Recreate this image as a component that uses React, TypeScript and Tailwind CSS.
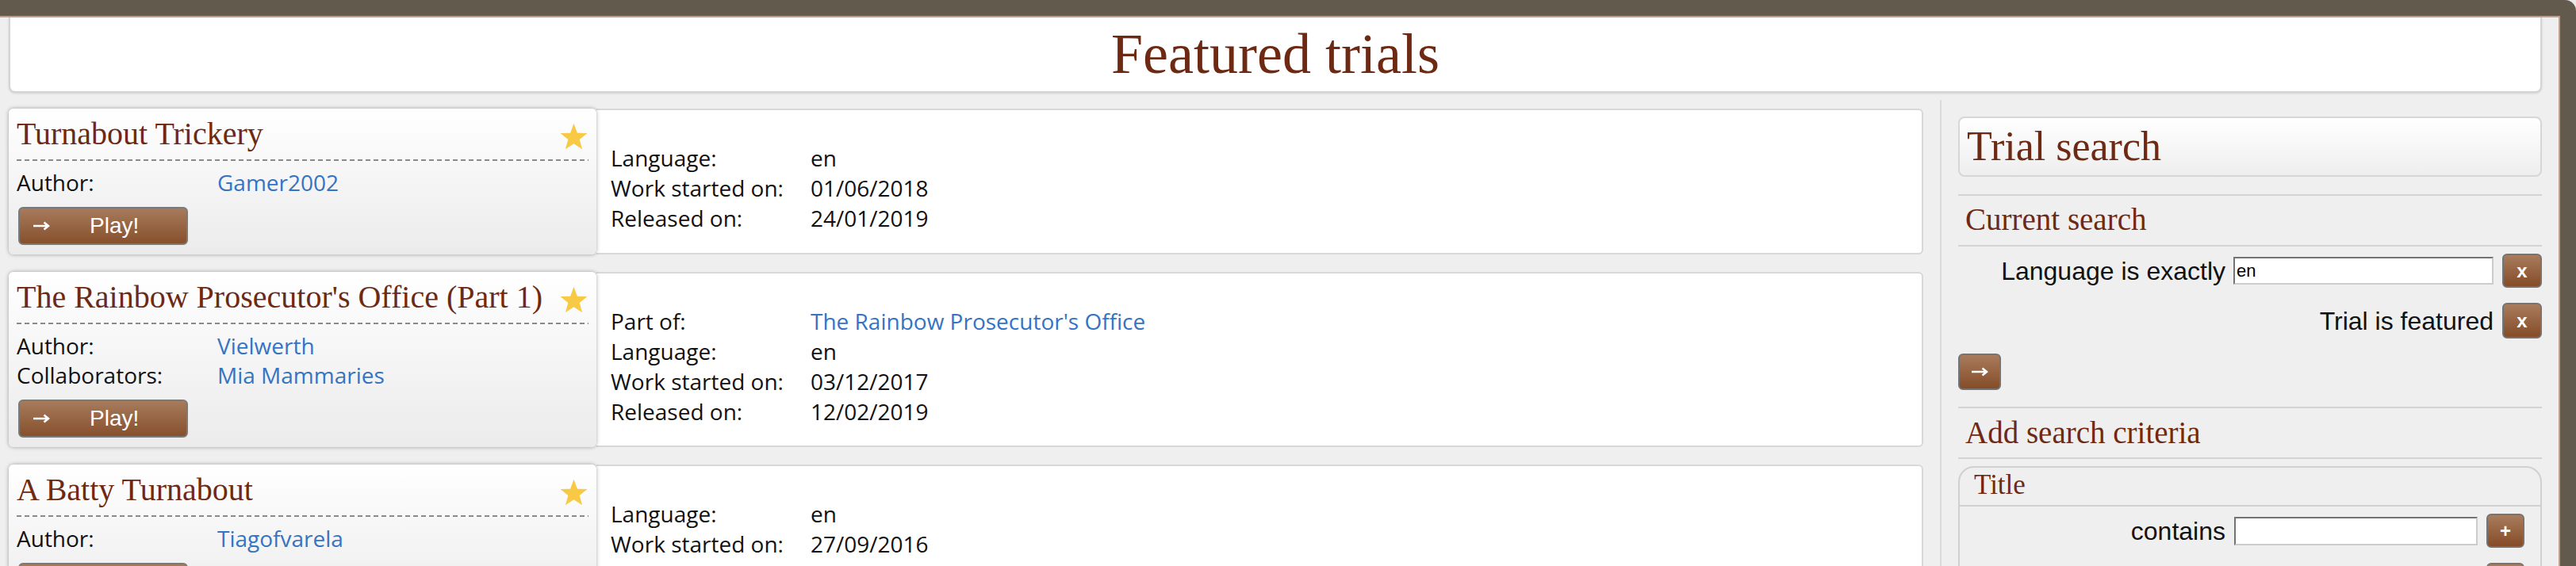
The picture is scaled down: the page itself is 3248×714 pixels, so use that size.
import React from 'react';

type Field = { label: string; value: string; link?: boolean };

interface Trial {
  title: string;
  credits: Field[];
  details: Field[];
}

const trials: Trial[] = [
  {
    title: 'Turnabout Trickery',
    credits: [{ label: 'Author:', value: 'Gamer2002', link: true }],
    details: [
      { label: 'Language:', value: 'en' },
      { label: 'Work started on:', value: '01/06/2018' },
      { label: 'Released on:', value: '24/01/2019' },
    ],
  },
  {
    title: "The Rainbow Prosecutor's Office (Part 1)",
    credits: [
      { label: 'Author:', value: 'Vielwerth', link: true },
      { label: 'Collaborators:', value: 'Mia Mammaries', link: true },
    ],
    details: [
      { label: 'Part of:', value: "The Rainbow Prosecutor's Office", link: true },
      { label: 'Language:', value: 'en' },
      { label: 'Work started on:', value: '03/12/2017' },
      { label: 'Released on:', value: '12/02/2019' },
    ],
  },
  {
    title: 'A Batty Turnabout',
    credits: [{ label: 'Author:', value: 'Tiagofvarela', link: true }],
    details: [
      { label: 'Language:', value: 'en' },
      { label: 'Work started on:', value: '27/09/2016' },
      { label: 'Released on:', value: '17/01/2019' },
    ],
  },
];

const StarIcon = () => (
  <svg className="w-[37px] h-[35px] mt-[8px] shrink-0" viewBox="0 0 24 23" fill="#f8c945">
    <polygon points="12,0.5 14.9,8.3 23.2,8.6 16.7,13.8 19,21.9 12,17.3 5,21.9 7.3,13.8 0.8,8.6 9.1,8.3" />
  </svg>
);

const ArrowIcon = () => (
  <svg width="22" height="12" viewBox="0 0 22 12" fill="none" stroke="white" strokeWidth={2.5}>
    <path d="M1 6h19M14.5 1.5L20 6l-5.5 4.5" />
  </svg>
);

// small brown button used in the search sidebar
const BrownButton = ({ children, className = '' }: { children: React.ReactNode; className?: string }) => (
  <button
    className={`flex items-center justify-center rounded-[6px] border-2 border-[#747474] bg-linear-to-b from-[#a87c5d] to-[#854c27] text-white font-['Liberation_Sans',Arial,sans-serif] font-bold text-[24px] leading-none ${className}`}
  >
    {children}
  </button>
);

const TrialCard = ({ trial }: { trial: Trial }) => (
  <div className="flex mb-[22px]">
    <div className="relative z-10 w-[741px] shrink-0 rounded-[6px] bg-linear-to-b from-white to-[#ebebeb] shadow-[0_0_5px_rgba(0,0,0,0.35)] px-[10px] pt-[10px] pb-[12px]">
      <div className="flex justify-between items-start pb-[10px]">
        <h2 className="font-['Liberation_Serif',Georgia,serif] text-[40px] leading-[44px] text-[#6e2913] whitespace-nowrap">
          {trial.title}
        </h2>
        <StarIcon />
      </div>
      <div className="h-[2px] bg-[repeating-linear-gradient(to_right,#8a8a8a_0_6px,transparent_6px_10px)]" />
      <div className="mt-[9px] grid grid-cols-[253px_1fr] font-['Open_Sans',sans-serif] text-[28px] leading-[37px] text-[#111]">
        {trial.credits.map((c) => (
          <React.Fragment key={c.label}>
            <span>{c.label}</span>
            <span className={c.link ? 'text-[#3573c4]' : ''}>{c.value}</span>
          </React.Fragment>
        ))}
      </div>
      <button className="mt-[12px] ml-[2px] w-[214px] h-[48px] flex items-center pl-[16px] rounded-[6px] border-2 border-[#7a7a7a] bg-linear-to-b from-[#a67b5c] to-[#87502c] text-white font-['Liberation_Sans',Arial,sans-serif] text-[28px]">
        <ArrowIcon />
        <span className="ml-[50px]">Play!</span>
      </button>
    </div>
    <div className="flex-1 flex flex-col justify-center pt-[16px] pl-[18px] bg-white border-y-2 border-r-2 border-[#d8d8d8] rounded-r-[6px]">
      <div className="grid grid-cols-[252px_1fr] font-['Open_Sans',sans-serif] text-[28px] leading-[38px] text-[#111]">
        {trial.details.map((d) => (
          <React.Fragment key={d.label}>
            <span>{d.label}</span>
            <span className={d.link ? 'text-[#3573c4]' : ''}>{d.value}</span>
          </React.Fragment>
        ))}
      </div>
    </div>
  </div>
);

export default function App() {
  return (
    <div className="bg-[#e9e9e9] min-h-screen">
      <div className="min-h-screen bg-[#625a4d] pt-[20px] pr-[20px] rounded-tr-[14px]">
        <div className="min-h-[694px] bg-[#efefef] border-t-2 border-r-2 border-[#c09e8e]">
          <div className="ml-[11px] mr-[21px] bg-white border-x-2 border-b-2 border-[#d4d4d4] rounded-b-[8px] shadow-[0_1px_3px_rgba(0,0,0,0.12)]">
            <h1 className="text-center font-['Liberation_Serif',Georgia,serif] text-[72px] leading-[93px] text-[#6e2913]">
              Featured trials
            </h1>
          </div>

          <div className="flex mt-[9px]">
            <main className="flex-1 pl-[11px] pr-[21px] pt-[11px]">
              {trials.map((t) => (
                <TrialCard key={t.title} trial={t} />
              ))}
            </main>

            <aside className="w-[780px] shrink-0 border-l-2 border-[#dadada] px-[21px] pt-[21px] font-['Liberation_Sans',Arial,sans-serif] text-[#111]">
              <div className="h-[76px] flex items-center pl-[9px] rounded-[8px] border-2 border-[#d6d6d6] bg-linear-to-b from-white to-[#eeeeee]">
                <h2 className="font-['Liberation_Serif',Georgia,serif] text-[52px] leading-[60px] text-[#6e2913]">Trial search</h2>
              </div>

              <h3 className="mt-[22px] border-y-2 border-[#d4d4d4] pl-[9px] pt-[7px] pb-[10px] font-['Liberation_Serif',Georgia,serif] text-[39px] leading-[45px] text-[#6e2913]">
                Current search
              </h3>

              <div className="mt-[9px] h-[43px] flex justify-end items-center">
                <span className="text-[32px]">Language is exactly</span>
                <input
                  readOnly
                  defaultValue="en"
                  className="ml-[10px] w-[328px] h-[35px] px-[2px] bg-white border-2 border-t-[#737373] border-l-[#737373] border-b-[#cccccc] border-r-[#cccccc] text-[22px] text-black outline-none"
                />
                <BrownButton className="ml-[11px] w-[50px] h-[43px]">x</BrownButton>
              </div>

              <div className="mt-[19px] h-[45px] flex justify-end items-center">
                <span className="text-[32px]">Trial is featured</span>
                <BrownButton className="ml-[11px] w-[50px] h-[45px]">x</BrownButton>
              </div>

              <BrownButton className="mt-[19px] w-[54px] h-[46px]">
                <ArrowIcon />
              </BrownButton>

              <h3 className="mt-[21px] border-y-2 border-[#d4d4d4] pl-[9px] pt-[8px] pb-[9px] font-['Liberation_Serif',Georgia,serif] text-[39px] leading-[45px] text-[#6e2913]">
                Add search criteria
              </h3>

              <div className="mt-[9px] border-2 border-[#d0d0d0] rounded-t-[20px]">
                <div className="pl-[18px] pt-[2px] pb-[5px] border-b-2 border-[#d0d0d0] font-['Liberation_Serif',Georgia,serif] text-[35px] leading-[40px] text-[#6e2913]">
                  Title
                </div>
                <div className="pt-[9px] pr-[20px] pb-[20px]">
                  <div className="h-[43px] flex justify-end items-center">
                    <span className="text-[32px]">contains</span>
                    <input
                      readOnly
                      className="ml-[11px] w-[307px] h-[36px] px-[2px] bg-white border-2 border-t-[#737373] border-l-[#737373] border-b-[#cccccc] border-r-[#cccccc] text-[22px] outline-none"
                    />
                    <BrownButton className="ml-[11px] w-[48px] h-[43px]">+</BrownButton>
                  </div>
                  <div className="mt-[19px] h-[43px] flex justify-end items-center">
                    <span className="text-[32px]">does not contain</span>
                    <input
                      readOnly
                      className="ml-[11px] w-[307px] h-[36px] px-[2px] bg-white border-2 border-t-[#737373] border-l-[#737373] border-b-[#cccccc] border-r-[#cccccc] text-[22px] outline-none"
                    />
                    <BrownButton className="ml-[11px] w-[48px] h-[43px]">+</BrownButton>
                  </div>
                </div>
              </div>
            </aside>
          </div>
        </div>
      </div>
    </div>
  );
}
